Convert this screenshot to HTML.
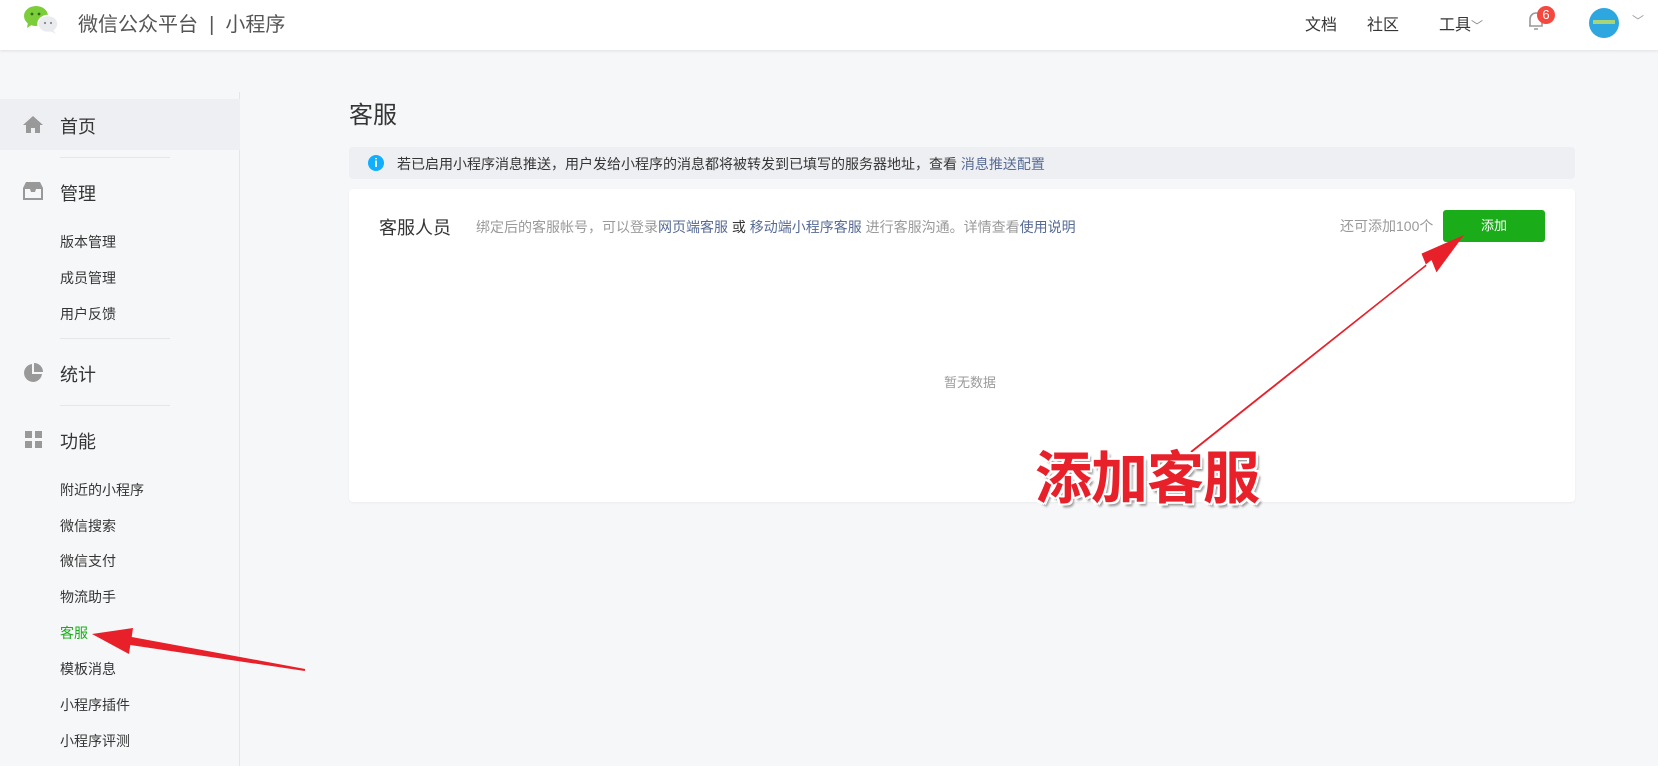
<!DOCTYPE html>
<html><head><meta charset="utf-8"><style>
*{margin:0;padding:0;box-sizing:border-box}
body{width:1658px;height:766px;overflow:hidden;background:#f6f7f9;font-family:"Liberation Sans","Noto Sans CJK SC",sans-serif;color:#353535;position:relative}
.hd{position:absolute;left:0;top:0;width:1658px;height:50px;background:#fff;box-shadow:0 1px 3px rgba(0,0,0,.1)}
.a{position:absolute;white-space:nowrap}
.side{position:absolute;left:0;top:92px;width:240px;height:674px;border-right:1px solid #e5e6e9}
.sep{position:absolute;left:60px;width:110px;height:1px;background:#e4e6ea}
.m{font-size:18px;color:#353535}
.s{font-size:14px;color:#353535}
a{color:#576b95;text-decoration:none}
</style></head><body>
<div class="hd"></div>
<svg class="a" style="left:23px;top:5px" width="38" height="30" viewBox="0 0 38 30">
<ellipse cx="13" cy="11" rx="12" ry="10" fill="#7bcd3a"/><path d="M5 17 L4 23 L10 19Z" fill="#7bcd3a"/>
<circle cx="9" cy="9" r="1.4" fill="#2f6b12"/><circle cx="16" cy="9" r="1.4" fill="#2f6b12"/>
<ellipse cx="25" cy="19" rx="10" ry="8.5" fill="#e9ebef" stroke="#fff" stroke-width="1.5"/><path d="M30 25 L33 29 L27 26Z" fill="#e9ebef"/>
<circle cx="22" cy="18" r="1.1" fill="#888"/><circle cx="28" cy="18" r="1.1" fill="#888"/></svg>
<div class="a" style="left:78px;top:8px;font-size:20px;color:#555">微信公众平台 &nbsp;|&nbsp; 小程序</div>
<div class="a" style="left:1305px;top:11px;font-size:16px">文档</div>
<div class="a" style="left:1367px;top:11px;font-size:16px">社区</div>
<div class="a" style="left:1439px;top:11px;font-size:16px">工具<span style="font-size:12px;color:#888">﹀</span></div>
<svg class="a" style="left:1526px;top:10px" width="20" height="22" viewBox="0 0 20 22"><path d="M4 16 V9 a6 6 0 0 1 12 0 V16 H3 M8 19 h4" fill="none" stroke="#999" stroke-width="1.6"/></svg>
<div class="a" style="left:1537px;top:6px;width:18px;height:18px;border-radius:9px;background:#f5483f;color:#fff;font-size:13px;text-align:center;line-height:18px">6</div>
<div class="a" style="left:1589px;top:8px;width:30px;height:30px;border-radius:15px;background:#2ea7e0"><div style="position:absolute;left:4px;top:12px;width:22px;height:4px;background:#dbe84b;opacity:.7"></div></div>
<div class="a" style="left:1632px;top:12px;font-size:12px;color:#999">﹀</div>

<div class="side"></div>
<div class="a" style="left:0;top:99px;width:240px;height:51px;background:#eeeff2"></div>
<svg class="a" style="left:23px;top:114px" width="20" height="20" viewBox="0 0 20 20"><path d="M10 2 L0 11 H3 V19 H8 V14 H12 V19 H17 V11 H20Z" fill="#999"/></svg>
<div class="a m" style="left:60px;top:113px">首页</div>
<div class="sep" style="top:157px"></div>
<svg class="a" style="left:23px;top:182px" width="20" height="18" viewBox="0 0 20 18"><path d="M3 0 H17 L20 6 V18 H0 V6Z M2 7 V16 H18 V7 H13 L12 10 H8 L7 7Z" fill="#999" fill-rule="evenodd"/></svg>
<div class="a m" style="left:60px;top:180px">管理</div>
<div class="a s" style="left:60px;top:232px">版本管理</div>
<div class="a s" style="left:60px;top:268px">成员管理</div>
<div class="a s" style="left:60px;top:304px">用户反馈</div>
<div class="sep" style="top:338px"></div>
<svg class="a" style="left:23px;top:363px" width="20" height="20" viewBox="0 0 20 20"><path d="M9 1 A9 9 0 1 0 19 11 H9Z M11 0 V9 H20 A9 9 0 0 0 11 0Z" fill="#999"/></svg>
<div class="a m" style="left:60px;top:361px">统计</div>
<div class="sep" style="top:405px"></div>
<svg class="a" style="left:25px;top:431px" width="18" height="18"><rect width="7" height="7" fill="#999"/><rect x="10" width="7" height="7" fill="#999"/><rect y="10" width="7" height="7" fill="#999"/><rect x="10" y="10" width="7" height="7" fill="#999"/></svg>
<div class="a m" style="left:60px;top:428px">功能</div>
<div class="a s" style="left:60px;top:480px">附近的小程序</div>
<div class="a s" style="left:60px;top:516px">微信搜索</div>
<div class="a s" style="left:60px;top:551px">微信支付</div>
<div class="a s" style="left:60px;top:587px">物流助手</div>
<div class="a s" style="left:60px;top:623px;color:#1aad19">客服</div>
<div class="a s" style="left:60px;top:659px">模板消息</div>
<div class="a s" style="left:60px;top:695px">小程序插件</div>
<div class="a s" style="left:60px;top:731px">小程序评测</div>

<div class="a" style="left:349px;top:95px;font-size:24px">客服</div>
<div class="a" style="left:349px;top:147px;width:1226px;height:32px;background:#eeeff2;border-radius:4px"></div>
<div class="a" style="left:368px;top:155px;width:16px;height:16px;border-radius:8px;background:#10aeff;color:#fff;font-size:12px;text-align:center;line-height:16px;font-weight:bold">i</div>
<div class="a" style="left:397px;top:154px;font-size:14px">若已启用小程序消息推送，用户发给小程序的消息都将被转发到已填写的服务器地址，查看 <a>消息推送配置</a></div>
<div class="a" style="left:349px;top:189px;width:1226px;height:313px;background:#fff;border-radius:4px;box-shadow:0 1px 2px rgba(0,0,0,.05)"></div>
<div class="a" style="left:379px;top:214px;font-size:18px">客服人员</div>
<div class="a" style="left:476px;top:217px;font-size:14px;color:#9a9a9a">绑定后的客服帐号，可以登录<a>网页端客服</a> <span style="color:#353535">或</span> <a>移动端小程序客服</a> 进行客服沟通。详情查看<a>使用说明</a></div>
<div class="a" style="left:1340px;top:216px;font-size:14px;color:#9a9a9a">还可添加100个</div>
<div class="a" style="left:1443px;top:210px;width:102px;height:32px;background:#1aad19;border-radius:3px;color:#fff;font-size:13px;text-align:center;line-height:32px">添加</div>
<div class="a" style="left:944px;top:372px;font-size:13px;color:#9a9a9a">暂无数据</div>

<svg class="a" style="left:0;top:0" width="1658" height="766">
<polygon points="1190.4,451.2 1431.5,260 1436.5,272.4 1464,235 1421.5,253.6 1426.5,266 1191.6,452.8" fill="#e8202a"/>
<polygon points="305.2,669 131.7,637 133,628 92,634 129,654 130.3,645 304.8,671" fill="#e8202a"/>
</svg>
<div class="a" style="left:1035px;top:448px;font-size:57px;font-weight:bold;color:#e8202a;letter-spacing:-1px;line-height:62px;text-shadow:2px 0 #fff,-2px 0 #fff,0 2px #fff,0 -2px #fff,2px 2px #fff,-2px -2px #fff,2px -2px #fff,-2px 2px #fff,3px 4px 2px #999">添加客服</div>
</body></html>
